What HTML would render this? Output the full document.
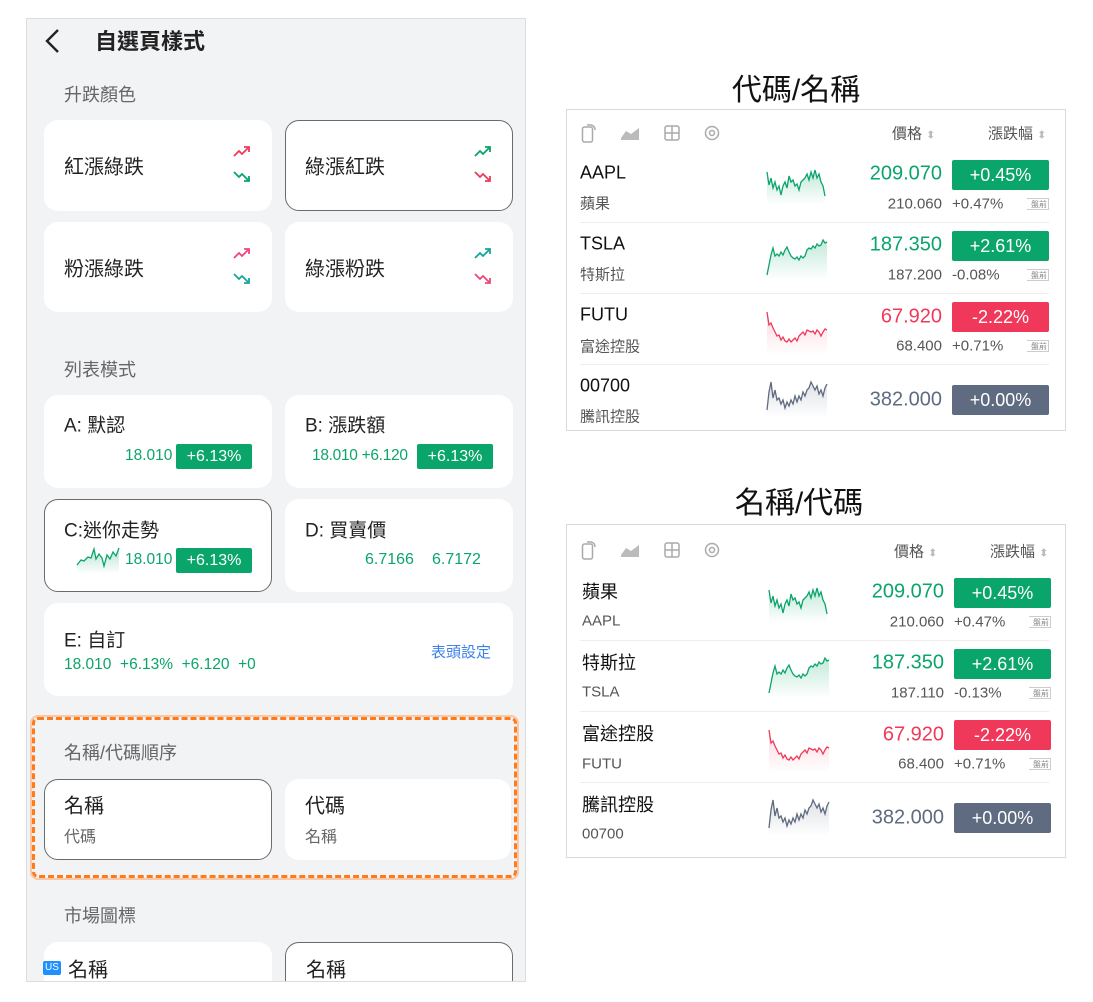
<!DOCTYPE html>
<html><head><meta charset="utf-8">
<style>
*{margin:0;padding:0;box-sizing:border-box}
body{width:1093px;height:1002px;background:#fff;position:relative;overflow:hidden;font-family:"Liberation Sans","Noto Sans CJK TC",sans-serif;color:#222}
.a{position:absolute;white-space:nowrap}
.panel{position:absolute;left:26px;top:18px;width:500px;height:964px;background:#f2f3f5;border:1px solid #dcdcdc;overflow:hidden}
.card{position:absolute;background:#fff;border-radius:14px}
.sel{border:1.5px solid #6b6b6b}
.lbl{font-size:18px;color:#666;transform:translateY(-50%)}
.ct{font-size:20px;color:#222;transform:translateY(-50%)}
.g{color:#0aa56a}
.gb{background:#0aa56a;color:#fff;text-align:center;border-radius:2px}
.tb{position:absolute;left:566px;width:500px;border:1px solid #d9d9d9;background:#fff}
.tt{font-size:30px;color:#111;transform:translate(-50%,-50%)}
.sym{font-size:18px;color:#111;transform:translateY(-50%);left:13px}
.sub{font-size:15px;color:#555;transform:translateY(-50%)}
.pr{font-size:20px;transform:translateY(-50%);text-align:right;width:120px}
.bd{width:97px;height:30px;line-height:30px;font-size:18px;color:#fff;text-align:center;border-radius:2px}
.tag{font-size:8px;color:#888;border:1px solid #ccc;border-left:none;width:22px;height:12px;line-height:11px;text-align:right;padding-right:1px}
.sep{position:absolute;left:13px;right:16px;height:1px;background:#eee}
.hd{font-size:15px;color:#555;transform:translateY(-50%)}
</style></head><body>

<div class="panel">
 <svg class="a" style="left:16px;top:9px" width="20" height="26" viewBox="0 0 20 26"><path d="M15 2 L4 13 L15 24" fill="none" stroke="#222" stroke-width="2.4"/></svg>
 <div class="a" style="left:68px;top:21px;transform:translateY(-50%);font-size:22px;font-weight:bold;color:#222">自選頁樣式</div>
 <div class="a lbl" style="left:37px;top:75px">升跌顏色</div>

 <div class="card" style="left:17px;top:101px;width:228px;height:91px"></div>
 <div class="card sel" style="left:258px;top:101px;width:228px;height:91px"></div>
 <div class="card" style="left:17px;top:203px;width:228px;height:90px"></div>
 <div class="card" style="left:258px;top:203px;width:228px;height:90px"></div>
 <div class="a ct" style="left:37px;top:146px">紅漲綠跌</div>
 <div class="a ct" style="left:278px;top:146px">綠漲紅跌</div>
 <div class="a ct" style="left:37px;top:248px">粉漲綠跌</div>
 <div class="a ct" style="left:278px;top:248px">綠漲粉跌</div>
 <svg class="a" style="left:205px;top:124px" width="20" height="44" viewBox="0 0 20 44">
  <path d="M2 13 L7 8 L10 11 L17 4 M12 4 L17 4 L17 9" fill="none" stroke="#ee3b5b" stroke-width="1.8"/>
  <path d="M2 29 L7 34 L10 31 L17 38 M12 38 L17 38 L17 33" fill="none" stroke="#0aa56a" stroke-width="1.8"/></svg>
 <svg class="a" style="left:446px;top:124px" width="20" height="44" viewBox="0 0 20 44">
  <path d="M2 13 L7 8 L10 11 L17 4 M12 4 L17 4 L17 9" fill="none" stroke="#0aa56a" stroke-width="1.8"/>
  <path d="M2 29 L7 34 L10 31 L17 38 M12 38 L17 38 L17 33" fill="none" stroke="#ee3b5b" stroke-width="1.8"/></svg>
 <svg class="a" style="left:205px;top:226px" width="20" height="44" viewBox="0 0 20 44">
  <path d="M2 13 L7 8 L10 11 L17 4 M12 4 L17 4 L17 9" fill="none" stroke="#f0467a" stroke-width="1.8"/>
  <path d="M2 29 L7 34 L10 31 L17 38 M12 38 L17 38 L17 33" fill="none" stroke="#13a89a" stroke-width="1.8"/></svg>
 <svg class="a" style="left:446px;top:226px" width="20" height="44" viewBox="0 0 20 44">
  <path d="M2 13 L7 8 L10 11 L17 4 M12 4 L17 4 L17 9" fill="none" stroke="#13a89a" stroke-width="1.8"/>
  <path d="M2 29 L7 34 L10 31 L17 38 M12 38 L17 38 L17 33" fill="none" stroke="#f0467a" stroke-width="1.8"/></svg>

 <div class="a lbl" style="left:37px;top:350px">列表模式</div>
 <div class="card" style="left:17px;top:376px;width:228px;height:93px"></div>
 <div class="card" style="left:258px;top:376px;width:228px;height:93px"></div>
 <div class="card sel" style="left:17px;top:480px;width:228px;height:93px"></div>
 <div class="card" style="left:258px;top:480px;width:228px;height:93px"></div>
 <div class="card" style="left:17px;top:584px;width:469px;height:93px"></div>
 <div class="a ct" style="left:37px;top:405px;font-size:19px">A: 默認</div>
 <div class="a g" style="left:98px;top:428px;font-size:15.5px">18.010</div>
 <div class="a gb" style="left:149px;top:425px;width:76px;height:25px;line-height:25px;font-size:16px">+6.13%</div>
 <div class="a ct" style="left:278px;top:405px;font-size:19px">B: 漲跌額</div>
 <div class="a g" style="left:285px;top:428px;font-size:15.5px;letter-spacing:-0.3px">18.010 +6.120</div>
 <div class="a gb" style="left:390px;top:425px;width:76px;height:25px;line-height:25px;font-size:16px">+6.13%</div>
 <div class="a ct" style="left:37px;top:510px;font-size:19px">C:迷你走勢</div>
 <svg class="a" style="left:49px;top:527px" width="44" height="28" viewBox="0 0 44 28">
  <defs><linearGradient id="gg" x1="0" y1="0" x2="0" y2="1"><stop offset="0" stop-color="#0aa56a" stop-opacity=".3"/><stop offset="1" stop-color="#0aa56a" stop-opacity="0"/></linearGradient></defs>
  <path d="M1 19 L5 14 L8 15 L12 11 L15 12 L18 3 L20 13 L23 8 L26 12 L28 20 L31 9 L34 13 L37 6 L40 10 L43 2 L43 28 L1 28Z" fill="url(#gg)"/>
  <path d="M1 19 L5 14 L8 15 L12 11 L15 12 L18 3 L20 13 L23 8 L26 12 L28 20 L31 9 L34 13 L37 6 L40 10 L43 2" fill="none" stroke="#0aa56a" stroke-width="1.3"/></svg>
 <div class="a g" style="left:98px;top:532px;font-size:15.5px">18.010</div>
 <div class="a gb" style="left:149px;top:529px;width:76px;height:25px;line-height:25px;font-size:16px">+6.13%</div>
 <div class="a ct" style="left:278px;top:510px;font-size:19px">D: 買賣價</div>
 <div class="a g" style="left:338px;top:532px;font-size:16px">6.7166</div>
 <div class="a g" style="left:405px;top:532px;font-size:16px">6.7172</div>
 <div class="a ct" style="left:37px;top:620px;font-size:19px">E: 自訂</div>
 <div class="a g" style="left:37px;top:637px;font-size:15.5px">18.010&nbsp; +6.13%&nbsp; +6.120&nbsp; +0</div>
 <div class="a" style="left:404px;top:622px;font-size:15px;color:#3b82e8">表頭設定</div>

 <div class="a" style="left:5px;top:698px;width:485px;height:161px;border:3px dashed #ff7a1a;outline:2px solid #f9c9a6;border-radius:6px"></div>
 <div class="a lbl" style="left:37px;top:733px">名稱/代碼順序</div>
 <div class="card sel" style="left:17px;top:760px;width:228px;height:81px"></div>
 <div class="card" style="left:258px;top:760px;width:226px;height:81px"></div>
 <div class="a ct" style="left:37px;top:785px">名稱</div>
 <div class="a" style="left:37px;top:804px;font-size:16px;color:#666">代碼</div>
 <div class="a ct" style="left:278px;top:785px">代碼</div>
 <div class="a" style="left:278px;top:804px;font-size:16px;color:#666">名稱</div>

 <div class="a lbl" style="left:37px;top:896px">市場圖標</div>
 <div class="card" style="left:17px;top:923px;width:228px;height:80px"></div>
 <div class="card sel" style="left:258px;top:923px;width:228px;height:80px"></div>
 <div class="a" style="left:16px;top:942px;width:18px;height:14px;background:#1e90ff;color:#fff;font-size:10px;line-height:14px;text-align:center;border-radius:2px">US</div>
 <div class="a ct" style="left:41px;top:949px">名稱</div>
 <div class="a ct" style="left:279px;top:949px">名稱</div>
</div>

<!-- Table 1 -->
<div class="a tt" style="left:796px;top:87px">代碼/名稱</div>
<div class="tb" style="top:109px;height:322px">
 <svg class="a" style="left:14px;top:12px;width:150px;height:22px" viewBox="0 0 150 22">
  <rect x="1.5" y="5" width="10" height="15" rx="2" fill="none" stroke="#aaa" stroke-width="1.5"/><path d="M6 3 Q14 2 14 8" fill="none" stroke="#aaa" stroke-width="1.5"/>
  <path d="M40 16 L45 9 L50 12 L58 6 L58 18 L40 18Z" fill="#bbb"/>
  <rect x="84" y="4" width="14" height="14" rx="2" fill="none" stroke="#aaa" stroke-width="1.5"/><path d="M91 4 V18 M84 11 H98" stroke="#aaa" stroke-width="1.5"/>
  <circle cx="131" cy="11" r="6.5" fill="none" stroke="#aaa" stroke-width="1.5"/><circle cx="131" cy="11" r="2.5" fill="none" stroke="#aaa" stroke-width="1.5"/>
 </svg>
 <div class="a hd" style="left:325px;top:23px">價格 <span style="color:#bbb;font-size:11px">⬍</span></div>
 <div class="a hd" style="left:421px;top:23px">漲跌幅 <span style="color:#bbb;font-size:11px">⬍</span></div>

 <div class="a sym" style="top:63px">AAPL</div><div class="a sub" style="left:13px;top:93px">蘋果</div>
 <div class="a pr g" style="left:255px;top:64px">209.070</div>
 <div class="a bd" style="left:385px;top:50px;background:#0aa56a">+0.45%</div>
 <div class="a sub" style="left:255px;top:94px;width:120px;text-align:right">210.060</div>
 <div class="a sub" style="left:385px;top:94px">+0.47%</div><div class="a tag" style="left:460px;top:88px">盤前</div>
 <div class="sep" style="top:112px"></div>

 <div class="a sym" style="top:134px">TSLA</div><div class="a sub" style="left:13px;top:164px">特斯拉</div>
 <div class="a pr g" style="left:255px;top:135px">187.350</div>
 <div class="a bd" style="left:385px;top:121px;background:#0aa56a">+2.61%</div>
 <div class="a sub" style="left:255px;top:165px;width:120px;text-align:right">187.200</div>
 <div class="a sub" style="left:385px;top:165px">-0.08%</div><div class="a tag" style="left:460px;top:159px">盤前</div>
 <div class="sep" style="top:183px"></div>

 <div class="a sym" style="top:205px">FUTU</div><div class="a sub" style="left:13px;top:236px">富途控股</div>
 <div class="a pr" style="left:255px;top:207px;color:#f0395a">67.920</div>
 <div class="a bd" style="left:385px;top:192px;background:#f0395a">-2.22%</div>
 <div class="a sub" style="left:255px;top:236px;width:120px;text-align:right">68.400</div>
 <div class="a sub" style="left:385px;top:236px">+0.71%</div><div class="a tag" style="left:460px;top:230px">盤前</div>
 <div class="sep" style="top:254px"></div>

 <div class="a sym" style="top:276px">00700</div><div class="a sub" style="left:13px;top:306px">騰訊控股</div>
 <div class="a pr" style="left:255px;top:290px;color:#5f6b80">382.000</div>
 <div class="a bd" style="left:385px;top:275px;background:#5f6b80">+0.00%</div>

 <svg class="a" style="left:199px;top:50px" width="66" height="270" viewBox="0 0 66 270">
  <defs>
   <linearGradient id="fg" x1="0" y1="0" x2="0" y2="1"><stop offset="0" stop-color="#0aa56a" stop-opacity=".25"/><stop offset="1" stop-color="#0aa56a" stop-opacity="0"/></linearGradient>
   <linearGradient id="fr" x1="0" y1="0" x2="0" y2="1"><stop offset="0" stop-color="#f0395a" stop-opacity=".2"/><stop offset="1" stop-color="#f0395a" stop-opacity="0"/></linearGradient>
   <linearGradient id="fs" x1="0" y1="0" x2="0" y2="1"><stop offset="0" stop-color="#5f6b80" stop-opacity=".2"/><stop offset="1" stop-color="#5f6b80" stop-opacity="0"/></linearGradient>
  </defs>
  <path d="M1 12 L3 25 L5 18 L7 28 L9 22 L11 30 L13 26 L15 35 L17 26 L19 22 L21 28 L23 16 L25 22 L27 20 L29 26 L31 24 L33 30 L35 22 L37 20 L39 18 L41 14 L43 20 L45 12 L47 18 L49 10 L51 18 L53 14 L55 22 L57 26 L59 36 L59 45 L1 45Z" fill="url(#fg)"/>
  <path d="M1 12 L3 25 L5 18 L7 28 L9 22 L11 30 L13 26 L15 35 L17 26 L19 22 L21 28 L23 16 L25 22 L27 20 L29 26 L31 24 L33 30 L35 22 L37 20 L39 18 L41 14 L43 20 L45 12 L47 18 L49 10 L51 18 L53 14 L55 22 L57 26 L59 36" fill="none" stroke="#0aa56a" stroke-width="1.3"/>
  <path d="M1 115 L3 105 L5 95 L7 88 L9 96 L11 94 L13 96 L15 92 L17 95 L19 90 L21 87 L23 92 L25 96 L27 98 L29 99 L31 97 L33 100 L35 96 L37 98 L39 96 L41 90 L43 88 L45 89 L47 86 L49 88 L51 84 L53 86 L55 85 L57 80 L59 83 L61 82 L61 120 L1 120Z" fill="url(#fg)"/>
  <path d="M1 115 L3 105 L5 95 L7 88 L9 96 L11 94 L13 96 L15 92 L17 95 L19 90 L21 87 L23 92 L25 96 L27 98 L29 99 L31 97 L33 100 L35 96 L37 98 L39 96 L41 90 L43 88 L45 89 L47 86 L49 88 L51 84 L53 86 L55 85 L57 80 L59 83 L61 82" fill="none" stroke="#0aa56a" stroke-width="1.3"/>
  <path d="M1 152 L3 165 L5 163 L7 168 L9 172 L11 176 L13 175 L15 180 L17 177 L19 181 L21 182 L23 179 L25 182 L27 180 L29 178 L31 181 L33 176 L35 174 L37 172 L39 175 L41 170 L43 171 L45 172 L47 171 L49 174 L51 170 L53 172 L55 176 L57 172 L59 169 L61 170 L61 195 L1 195Z" fill="url(#fr)"/>
  <path d="M1 152 L3 165 L5 163 L7 168 L9 172 L11 176 L13 175 L15 180 L17 177 L19 181 L21 182 L23 179 L25 182 L27 180 L29 178 L31 181 L33 176 L35 174 L37 172 L39 175 L41 170 L43 171 L45 172 L47 171 L49 174 L51 170 L53 172 L55 176 L57 172 L59 169 L61 170" fill="none" stroke="#f0395a" stroke-width="1.3"/>
  <path d="M1 250 L3 232 L5 222 L7 238 L9 230 L11 240 L13 238 L15 244 L17 240 L19 248 L21 242 L23 246 L25 240 L27 244 L29 236 L31 242 L33 236 L35 240 L37 232 L39 236 L41 230 L43 228 L45 222 L47 226 L49 230 L51 226 L53 234 L55 230 L57 236 L59 228 L61 224 L61 258 L1 258Z" fill="url(#fs)"/>
  <path d="M1 250 L3 232 L5 222 L7 238 L9 230 L11 240 L13 238 L15 244 L17 240 L19 248 L21 242 L23 246 L25 240 L27 244 L29 236 L31 242 L33 236 L35 240 L37 232 L39 236 L41 230 L43 228 L45 222 L47 226 L49 230 L51 226 L53 234 L55 230 L57 236 L59 228 L61 224" fill="none" stroke="#5f6b80" stroke-width="1.3"/>
 </svg>
</div>

<!-- Table 2 -->
<div class="a tt" style="left:799px;top:500px">名稱/代碼</div>
<div class="tb" style="top:524px;height:334px">
 <svg class="a" style="left:14px;top:14px;width:150px;height:22px" viewBox="0 0 150 22">
  <rect x="1.5" y="5" width="10" height="15" rx="2" fill="none" stroke="#aaa" stroke-width="1.5"/><path d="M6 3 Q14 2 14 8" fill="none" stroke="#aaa" stroke-width="1.5"/>
  <path d="M40 16 L45 9 L50 12 L58 6 L58 18 L40 18Z" fill="#bbb"/>
  <rect x="84" y="4" width="14" height="14" rx="2" fill="none" stroke="#aaa" stroke-width="1.5"/><path d="M91 4 V18 M84 11 H98" stroke="#aaa" stroke-width="1.5"/>
  <circle cx="131" cy="11" r="6.5" fill="none" stroke="#aaa" stroke-width="1.5"/><circle cx="131" cy="11" r="2.5" fill="none" stroke="#aaa" stroke-width="1.5"/>
 </svg>
 <div class="a hd" style="left:327px;top:26px">價格 <span style="color:#bbb;font-size:11px">⬍</span></div>
 <div class="a hd" style="left:423px;top:26px">漲跌幅 <span style="color:#bbb;font-size:11px">⬍</span></div>

 <div class="a sym" style="top:66px;left:15px">蘋果</div><div class="a sub" style="left:15px;top:96px">AAPL</div>
 <div class="a pr g" style="left:257px;top:67px">209.070</div>
 <div class="a bd" style="left:387px;top:53px;background:#0aa56a">+0.45%</div>
 <div class="a sub" style="left:257px;top:97px;width:120px;text-align:right">210.060</div>
 <div class="a sub" style="left:387px;top:97px">+0.47%</div><div class="a tag" style="left:462px;top:91px">盤前</div>
 <div class="sep" style="top:115px"></div>

 <div class="a sym" style="top:137px;left:15px">特斯拉</div><div class="a sub" style="left:15px;top:167px">TSLA</div>
 <div class="a pr g" style="left:257px;top:138px">187.350</div>
 <div class="a bd" style="left:387px;top:124px;background:#0aa56a">+2.61%</div>
 <div class="a sub" style="left:257px;top:168px;width:120px;text-align:right">187.110</div>
 <div class="a sub" style="left:387px;top:168px">-0.13%</div><div class="a tag" style="left:462px;top:162px">盤前</div>
 <div class="sep" style="top:186px"></div>

 <div class="a sym" style="top:208px;left:15px">富途控股</div><div class="a sub" style="left:15px;top:239px">FUTU</div>
 <div class="a pr" style="left:257px;top:210px;color:#f0395a">67.920</div>
 <div class="a bd" style="left:387px;top:195px;background:#f0395a">-2.22%</div>
 <div class="a sub" style="left:257px;top:239px;width:120px;text-align:right">68.400</div>
 <div class="a sub" style="left:387px;top:239px">+0.71%</div><div class="a tag" style="left:462px;top:233px">盤前</div>
 <div class="sep" style="top:257px"></div>

 <div class="a sym" style="top:279px;left:15px">騰訊控股</div><div class="a sub" style="left:15px;top:309px">00700</div>
 <div class="a pr" style="left:257px;top:293px;color:#5f6b80">382.000</div>
 <div class="a bd" style="left:387px;top:278px;background:#5f6b80">+0.00%</div>

 <svg class="a" style="left:201px;top:53px" width="66" height="270" viewBox="0 0 66 270">
  <path d="M1 12 L3 25 L5 18 L7 28 L9 22 L11 30 L13 26 L15 35 L17 26 L19 22 L21 28 L23 16 L25 22 L27 20 L29 26 L31 24 L33 30 L35 22 L37 20 L39 18 L41 14 L43 20 L45 12 L47 18 L49 10 L51 18 L53 14 L55 22 L57 26 L59 36 L59 45 L1 45Z" fill="url(#fg)"/>
  <path d="M1 12 L3 25 L5 18 L7 28 L9 22 L11 30 L13 26 L15 35 L17 26 L19 22 L21 28 L23 16 L25 22 L27 20 L29 26 L31 24 L33 30 L35 22 L37 20 L39 18 L41 14 L43 20 L45 12 L47 18 L49 10 L51 18 L53 14 L55 22 L57 26 L59 36" fill="none" stroke="#0aa56a" stroke-width="1.3"/>
  <path d="M1 115 L3 105 L5 95 L7 88 L9 96 L11 94 L13 96 L15 92 L17 95 L19 90 L21 87 L23 92 L25 96 L27 98 L29 99 L31 97 L33 100 L35 96 L37 98 L39 96 L41 90 L43 88 L45 89 L47 86 L49 88 L51 84 L53 86 L55 85 L57 80 L59 83 L61 82 L61 120 L1 120Z" fill="url(#fg)"/>
  <path d="M1 115 L3 105 L5 95 L7 88 L9 96 L11 94 L13 96 L15 92 L17 95 L19 90 L21 87 L23 92 L25 96 L27 98 L29 99 L31 97 L33 100 L35 96 L37 98 L39 96 L41 90 L43 88 L45 89 L47 86 L49 88 L51 84 L53 86 L55 85 L57 80 L59 83 L61 82" fill="none" stroke="#0aa56a" stroke-width="1.3"/>
  <path d="M1 152 L3 165 L5 163 L7 168 L9 172 L11 176 L13 175 L15 180 L17 177 L19 181 L21 182 L23 179 L25 182 L27 180 L29 178 L31 181 L33 176 L35 174 L37 172 L39 175 L41 170 L43 171 L45 172 L47 171 L49 174 L51 170 L53 172 L55 176 L57 172 L59 169 L61 170 L61 195 L1 195Z" fill="url(#fr)"/>
  <path d="M1 152 L3 165 L5 163 L7 168 L9 172 L11 176 L13 175 L15 180 L17 177 L19 181 L21 182 L23 179 L25 182 L27 180 L29 178 L31 181 L33 176 L35 174 L37 172 L39 175 L41 170 L43 171 L45 172 L47 171 L49 174 L51 170 L53 172 L55 176 L57 172 L59 169 L61 170" fill="none" stroke="#f0395a" stroke-width="1.3"/>
  <path d="M1 250 L3 232 L5 222 L7 238 L9 230 L11 240 L13 238 L15 244 L17 240 L19 248 L21 242 L23 246 L25 240 L27 244 L29 236 L31 242 L33 236 L35 240 L37 232 L39 236 L41 230 L43 228 L45 222 L47 226 L49 230 L51 226 L53 234 L55 230 L57 236 L59 228 L61 224 L61 258 L1 258Z" fill="url(#fs)"/>
  <path d="M1 250 L3 232 L5 222 L7 238 L9 230 L11 240 L13 238 L15 244 L17 240 L19 248 L21 242 L23 246 L25 240 L27 244 L29 236 L31 242 L33 236 L35 240 L37 232 L39 236 L41 230 L43 228 L45 222 L47 226 L49 230 L51 226 L53 234 L55 230 L57 236 L59 228 L61 224" fill="none" stroke="#5f6b80" stroke-width="1.3"/>
 </svg>
</div>
</body></html>
